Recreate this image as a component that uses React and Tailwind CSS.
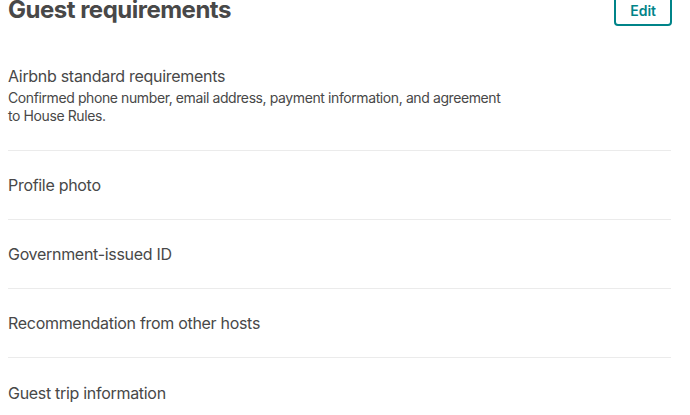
import React from "react";

const rows = [
  "Profile photo",
  "Government-issued ID",
  "Recommendation from other hosts",
  "Guest trip information",
];

const App = () => {
  return (
    <div
      className="w-[690px] h-[415px] overflow-hidden bg-white text-[#484848]"
      style={{ fontFamily: "Inter, 'Noto Sans', sans-serif" }}
    >
      <div className="pl-2 pr-[19px] -mt-[6px]">
        {/* Header */}
        <div className="flex items-center justify-between h-[32px]">
          <h1 className="text-[24px] leading-[28px] font-bold tracking-[-0.5px]">
            Guest requirements
          </h1>
          <button className="h-[32px] px-[14px] mr-[-1px] border-2 border-[#008489] rounded-[4px] text-[#008489] text-[14px] font-semibold">
            Edit
          </button>
        </div>

        {/* Standard requirements */}
        <div className="pt-[39px] pb-[25px] border-b border-[#ebebeb]">
          <p className="text-[16px] leading-[22px] tracking-[-0.3px]">
            Airbnb standard requirements
          </p>
          <p className="mt-[2px] text-[14px] leading-[18px] tracking-[-0.4px] max-w-[500px]">
            Confirmed phone number, email address, payment information, and agreement
            to House Rules.
          </p>
        </div>

        {rows.map((r, i) => (
          <div
            key={r}
            className={`h-[69px] flex items-center ${
              i < rows.length - 1 ? "border-b border-[#ebebeb]" : ""
            }`}
          >
            <p className="text-[16px] leading-[22px] tracking-[-0.3px]">{r}</p>
          </div>
        ))}
      </div>
    </div>
  );
};

export default App;
